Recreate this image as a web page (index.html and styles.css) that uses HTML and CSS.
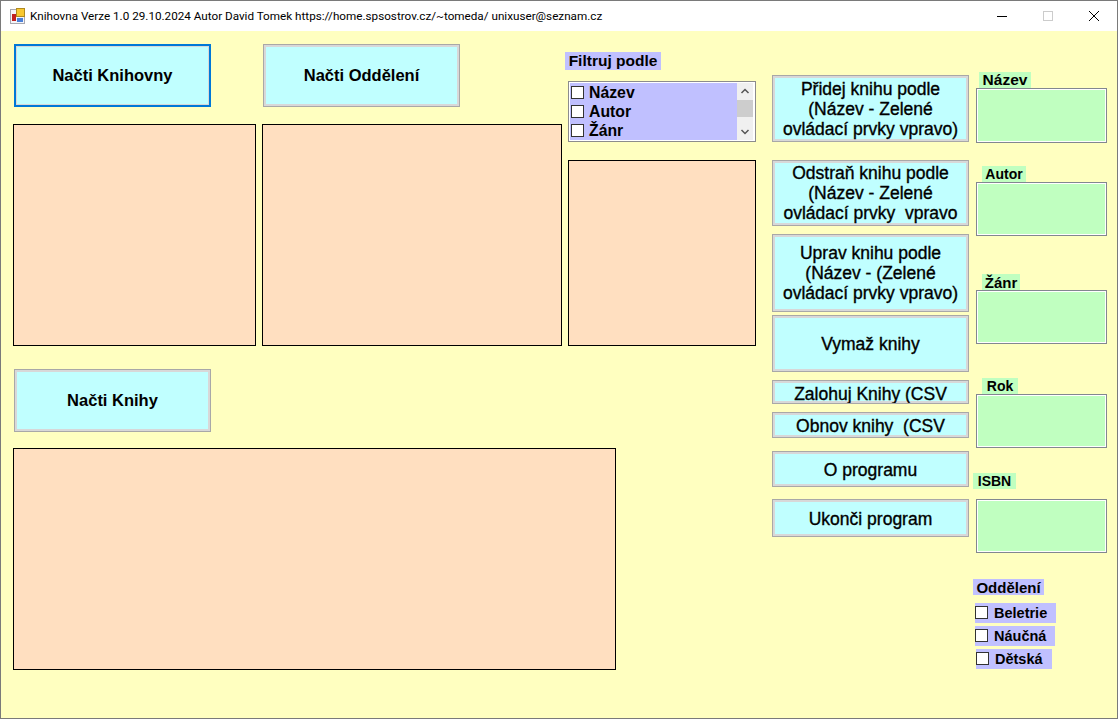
FILE: index.html
```html
<!DOCTYPE html>
<html lang="en">
<head>
  <meta charset="UTF-8" />
  <meta name="viewport" content="width=device-width, initial-scale=1" />
  <title>Knihovna</title>
  <link rel="stylesheet" href="styles.css">
</head>
<body>
  <div class="window">
    <div class="titlebar">
      <svg class="appIcon" width="16" height="16" viewBox="0 0 16 16">
        <rect x="0.5" y="1.5" width="14" height="14" fill="#f4f4f8" stroke="#a8a8b0"/>
        <rect x="2" y="6" width="4" height="7" fill="#c02020"/>
        <rect x="6.5" y="0.5" width="8" height="8" fill="#f8c830" stroke="#b08a20"/>
        <rect x="7" y="10" width="6" height="4" fill="#4a80d8"/>
      </svg>
      <span class="titleText">Knihovna Verze 1.0 29.10.2024 Autor David Tomek https://home.spsostrov.cz/~tomeda/ unixuser@seznam.cz</span>
      <div class="winButtons">
        <span class="winBtn"><svg width="10" height="10" viewBox="0 0 10 10"><path d="M0 5.5h10" stroke="#000"/></svg></span>
        <span class="winBtn"><svg width="10" height="10" viewBox="0 0 10 10"><rect x="0.5" y="0.5" width="9" height="9" fill="none" stroke="#ccc"/></svg></span>
        <span class="winBtn"><svg width="10" height="10" viewBox="0 0 10 10"><path d="M0 0l10 10M10 0L0 10" stroke="#000"/></svg></span>
      </div>
    </div>

    <div class="client">
      <div class="leftArea">
        <div class="topArea">
          <div class="colLibraries">
            <button class="btn btnBig btnFocus">Načti Knihovny</button>
            <div class="panel panelLibraries"></div>
          </div>
          <div class="colDepartments">
            <button class="btn btnBig">Načti Oddělení</button>
            <div class="panel panelDepartments"></div>
          </div>
          <div class="colFilter">
            <span class="tag tagBlue filterLabel">Filtruj podle</span>
            <div class="listBox">
              <div class="listItems">
                <div class="listItem"><span class="check"></span>Název</div>
                <div class="listItem"><span class="check"></span>Autor</div>
                <div class="listItem"><span class="check"></span>Žánr</div>
              </div>
              <div class="scrollBar">
                <svg width="16" height="17" viewBox="0 0 16 17"><path d="M4.5 10L8 6.5l3.5 3.5" fill="none" stroke="#555" stroke-width="1.5"/></svg>
                <div class="scrollTrack"><div class="scrollThumb"></div></div>
                <svg width="16" height="17" viewBox="0 0 16 17"><path d="M4.5 7L8 10.5 11.5 7" fill="none" stroke="#555" stroke-width="1.5"/></svg>
              </div>
            </div>
            <div class="panel panelFilter"></div>
          </div>
        </div>
        <button class="btn btnBig btnBooks">Načti Knihy</button>
        <div class="panel panelBooks"></div>
      </div>

      <div class="actions">
        <button class="btn btnAction actAdd">Přidej knihu podle<br>(Název - Zelené<br>ovládací prvky vpravo)</button>
        <button class="btn btnAction actRemove">Odstraň knihu podle<br>(Název - Zelené<br>ovládací prvky&nbsp; vpravo</button>
        <button class="btn btnAction actEdit">Uprav knihu podle<br>(Název - (Zelené<br>ovládací prvky vpravo)</button>
        <button class="btn btnAction actClear">Vymaž knihy</button>
        <button class="btn btnAction actBackup">Zalohuj Knihy (CSV</button>
        <button class="btn btnAction actRestore">Obnov knihy&nbsp; (CSV</button>
        <button class="btn btnAction actAbout">O programu</button>
        <button class="btn btnAction actQuit">Ukonči program</button>
      </div>

      <div class="fields">
        <span class="tag tagGreen fName">Název</span>
        <div class="fieldBox boxFirst"></div>
        <span class="tag tagGreen fAuthor">Autor</span>
        <div class="fieldBox"></div>
        <span class="tag tagGreen fGenre">Žánr</span>
        <div class="fieldBox"></div>
        <span class="tag tagGreen fYear">Rok</span>
        <div class="fieldBox"></div>
        <span class="tag tagGreen fIsbn">ISBN</span>
        <div class="fieldBox boxIsbn"></div>
        <span class="tag tagBlue fDept">Oddělení</span>
        <div class="deptItem deptA"><span class="check"></span>Beletrie</div>
        <div class="deptItem deptB"><span class="check"></span>Náučná</div>
        <div class="deptItem deptC"><span class="check"></span>Dětská</div>
      </div>
    </div>
  </div>
</body>
</html>
```

FILE: styles.css
```css
* {
  box-sizing: border-box;
}

body {
  margin: 0;
  background: #fff;
  overflow: hidden;
}

.window {
  width: 1118px;
  height: 719px;
  display: flex;
  flex-direction: column;
  border: 1px solid #7a7a7a;
  font-family: "Liberation Sans", Arial, sans-serif;
  color: #000;
}

.titlebar {
  height: 30px;
  flex: none;
  background: #fff;
  display: flex;
  align-items: center;
  padding-left: 9px;
}

.appIcon {
  flex: none;
  margin-right: 4px;
}

.titleText {
  font-family: Roboto, sans-serif;
  font-size: 11.7px;
}

.winButtons {
  margin-left: auto;
  display: flex;
}

.winBtn {
  width: 46px;
  height: 30px;
  display: flex;
  align-items: center;
  justify-content: center;
}

.client {
  flex: 1;
  background: #ffffc0;
  display: flex;
  padding-left: 12px;
}

.btn {
  display: block;
  padding: 0;
  font-family: inherit;
  color: #000;
  background: #c0ffff;
  border: 1px solid #a8a8a8;
  box-shadow: inset 0 0 0 2px #d8d8d8;
  overflow: hidden;
  text-align: center;
}

.btnBig {
  width: 197px;
  height: 63px;
  margin-left: 1px;
  font-size: 16.5px;
  font-weight: bold;
}

.btnFocus {
  border: 2px solid #0078d7;
  box-shadow: inset 0 0 0 1px #d8d8d8;
}

.panel {
  background: #ffdfc0;
  border: 1px solid #000;
}

.leftArea {
  width: 744px;
  flex: none;
  padding-top: 13px;
}

.topArea {
  display: flex;
  gap: 6px;
}

.colLibraries {
  width: 243px;
}

.colDepartments {
  width: 300px;
}

.colFilter {
  width: 188px;
  padding-top: 8px;
}

.panelLibraries,
.panelDepartments {
  height: 222px;
  margin-top: 17px;
}

.panelFilter {
  height: 186px;
  margin-top: 18px;
}

.filterLabel {
  margin-left: -3px;
  width: 96px;
  height: 18px;
  font-size: 15.5px;
}

.listBox {
  height: 61px;
  margin-top: 11px;
  border: 1px solid #8c8c8c;
  background: #fff;
  display: flex;
  padding: 1px 2px 1px 1px;
}

.listItems {
  flex: 1;
  background: #c0c0ff;
  padding-left: 1px;
}

.listItem {
  height: 19px;
  display: flex;
  align-items: center;
  font-size: 15.8px;
  font-weight: bold;
}

.check {
  width: 13px;
  height: 13px;
  margin-right: 5px;
  flex: none;
  background: #fff;
  border: 1px solid #333;
}

.scrollBar {
  width: 16px;
  flex: none;
  background: #f0f0f0;
  display: flex;
  flex-direction: column;
}

.scrollBar svg {
  flex: none;
}

.scrollTrack {
  flex: 1;
}

.scrollThumb {
  height: 17px;
  background: #cdcdcd;
}

.btnBooks {
  margin-top: 23px;
}

.panelBooks {
  width: 603px;
  height: 222px;
  margin-top: 16px;
}

.actions {
  width: 197px;
  flex: none;
  margin-left: 15px;
  padding-top: 44px;
}

.btnAction {
  width: 197px;
  font-size: 17.5px;
  line-height: 20px;
  -webkit-text-stroke: 0.35px #000;
}

.actAdd { height: 67px; }
.actRemove { height: 66px; margin-top: 18px; }
.actEdit { height: 78px; margin-top: 8px; }
.actClear { height: 57px; margin-top: 3px; }
.actBackup { height: 24px; margin-top: 8px; padding-top: 3px; }
.actRestore { height: 26px; margin-top: 8px; padding-top: 2px; }
.actAbout { height: 36px; margin-top: 13px; padding-top: 1px; }
.actQuit { height: 38px; margin-top: 12px; padding-top: 1px; }

.fields {
  width: 140px;
  flex: none;
  margin-left: 4px;
  padding-top: 41px;
  display: flex;
  flex-direction: column;
  align-items: flex-start;
}

.tag {
  display: flex;
  align-items: center;
  justify-content: center;
  font-weight: bold;
}

.tagBlue {
  background: #c0c0ff;
}

.tagGreen {
  background: #c0ffc0;
  height: 16px;
  font-size: 14px;
}

.fieldBox {
  width: 131px;
  height: 54px;
  margin-left: 3px;
  background: #c0ffc0;
  border: 1px solid #828790;
  outline: 1px solid #fff;
  outline-offset: -2px;
}

.boxFirst { height: 55px; }

.fName { width: 52px; margin-left: 6px; font-size: 15.5px; }
.fAuthor { width: 44px; margin-left: 9px; margin-top: 23px; }
.fGenre { width: 38px; margin-left: 9px; margin-top: 38px; font-size: 15px; }
.fYear { width: 36px; margin-left: 9px; margin-top: 34px; }
.fIsbn { width: 43px; margin-top: 25px; font-size: 14px; }
.boxIsbn { margin-top: 10px; }

.fDept {
  width: 71px;
  height: 16px;
  margin-top: 26px;
  font-size: 15px;
}

.deptItem {
  height: 20px;
  margin-left: 2px;
  display: flex;
  align-items: center;
  background: #c0c0ff;
  font-size: 14.5px;
  font-weight: bold;
}

.deptItem .check {
  margin-right: 6px;
  margin-bottom: 1px;
}

.deptA { width: 81px; margin-top: 8px; }
.deptB { width: 80px; margin-top: 3px; }
.deptC { width: 76px; margin-top: 3px; margin-left: 3px; }
```
